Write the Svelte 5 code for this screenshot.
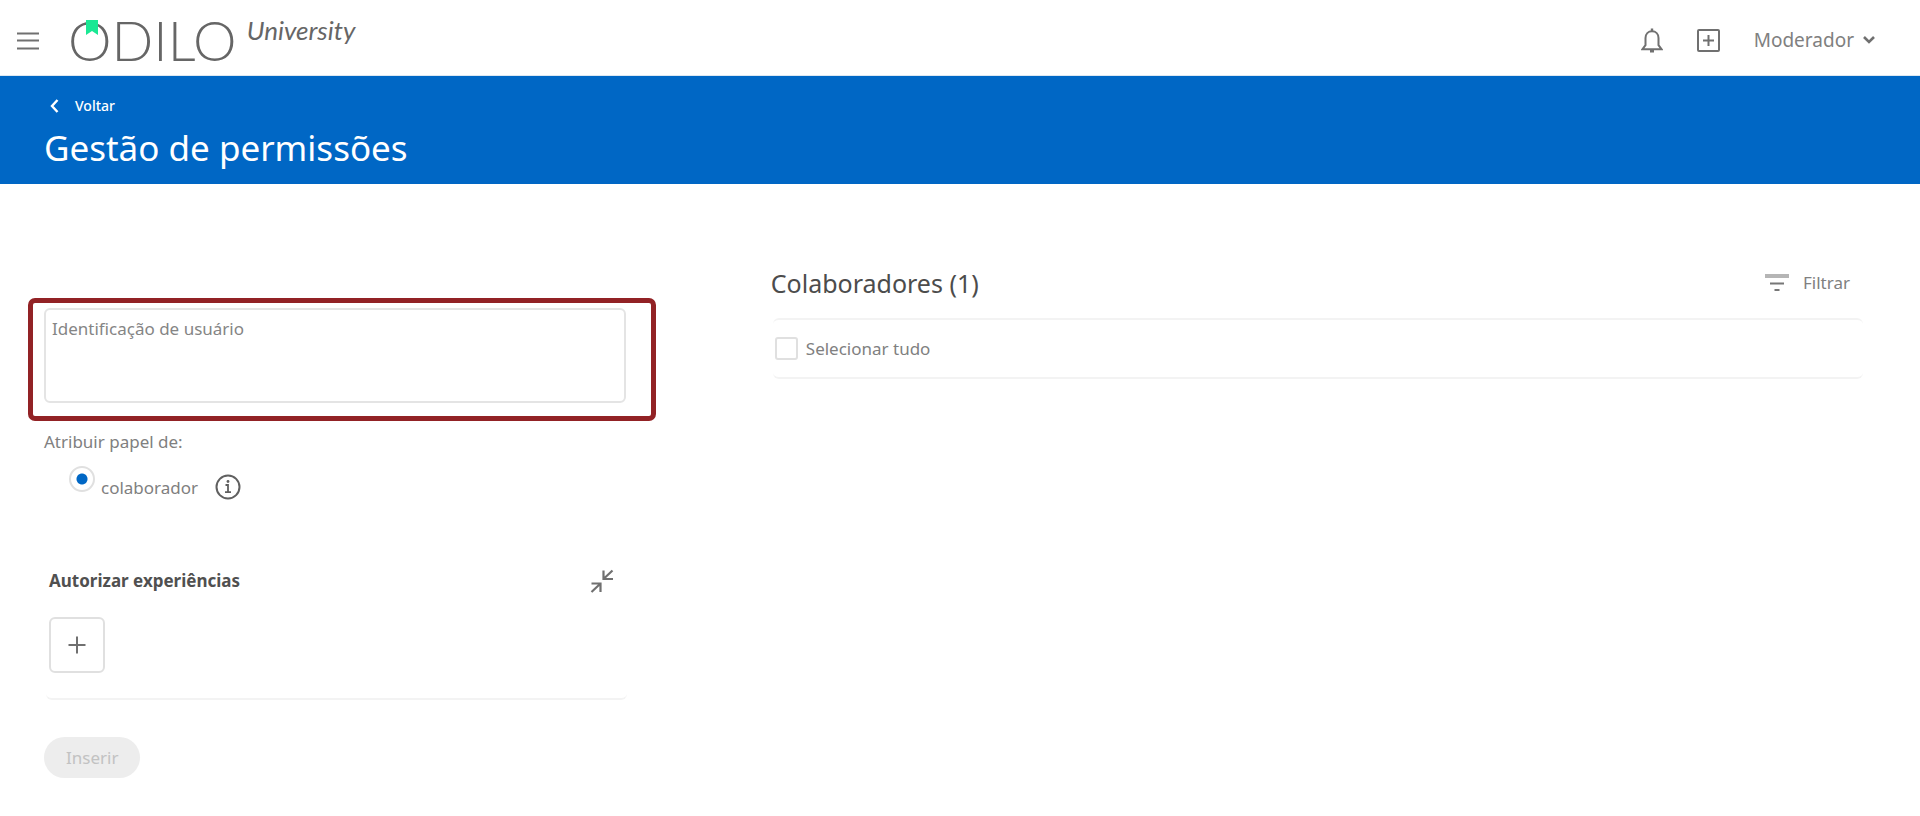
<script lang="ts">
  let userId = $state('');
  let role = $state('colaborador');
  let selectAll = $state(false);
  let expanded = $state(true);
  let collaborators = $state(1);
</script>

<header class="topbar">
  <button class="icon-btn menu" aria-label="Menu">
    <svg width="22" height="18" viewBox="0 0 22 18"><path d="M0 1.5h22M0 8.5h22M0 16.500h22" stroke="#707070" stroke-width="2" /></svg>
  </button>
  <a class="logo" href="#home">
    <span class="brand">ODILO</span>
    <svg class="bookmark" width="12" height="15" viewBox="0 0 12 15"><path d="M0 0h12v15l-6-4-6 4z" fill="#1ae894" /></svg>
    <span class="suffix">University</span>
  </a>
  <nav class="actions">
    <button class="icon-btn" aria-label="Notificações">
      <svg width="22" height="25" viewBox="0 0 22 25" fill="none" stroke="#707070" stroke-width="2"><path d="M1.5 21.200h19l-3-4V10c0-4-2.700-6.800-6.500-6.800S4.500 6 4.500 10v7.200z" /><path d="M11 0.500v2.500M9 23.200h4" stroke-width="2.400" /></svg>
    </button>
    <button class="icon-btn" aria-label="Criar">
      <svg width="23" height="23" viewBox="0 0 23 23" fill="none" stroke="#707070" stroke-width="2"><rect x="1" y="1" width="21" height="21" rx="1" /><path d="M6 11.500h11M11.500 6v11" /></svg>
    </button>
    <button class="account">
      Moderador
      <svg width="12" height="8" viewBox="0 0 12 8" fill="none" stroke="#707070" stroke-width="2.600"><path d="M1 1l5 5 5-5" /></svg>
    </button>
  </nav>
</header>

<section class="banner">
  <a class="back" href="#back">
    <svg width="9" height="14" viewBox="0 0 9 14" fill="none" stroke="#fff" stroke-width="2.400"><path d="M7.500 1L2 7l5.500 6" /></svg>
    Voltar
  </a>
  <h1>Gestão de permissões</h1>
</section>

<main>
  <form class="assign" onsubmit={(e) => e.preventDefault()}>
    <div class="highlight">
      <textarea bind:value={userId} placeholder="Identificação de usuário" aria-label="Identificação de usuário"></textarea>
    </div>

    <fieldset>
      <legend>Atribuir papel de:</legend>
      <div class="role">
        <input id="role-collab" type="radio" name="role" value="colaborador" bind:group={role} />
        <label for="role-collab">colaborador</label>
        <button type="button" class="icon-btn info" aria-label="Informação">
          <svg width="26" height="26" viewBox="0 0 26 26" fill="none" stroke="#606060" stroke-width="2"><circle cx="13" cy="13" r="11.500" /><path d="M10.500 11H13v7M10 18.200h6" stroke-width="1.800" /><circle cx="13" cy="7.500" r="1.400" fill="#606060" stroke="none" /></svg>
        </button>
      </div>
    </fieldset>

    <section class="experiences">
      <div class="experiences-head">
        <h2>Autorizar experiências</h2>
        <button type="button" class="icon-btn" aria-label="Recolher" onclick={() => (expanded = !expanded)}>
          <svg width="24" height="24" viewBox="0 0 24 24" fill="none" stroke="#707070" stroke-width="2.200"><path d="M13.500 1.500v8.500H23M22.500 1.500L14 9.500M1.500 14.500h9V23M10 15l-8.500 8" /></svg>
        </button>
      </div>
      {#if expanded}
        <button type="button" class="add" aria-label="Adicionar experiência">
          <svg width="18" height="18" viewBox="0 0 18 18" stroke="#707070" stroke-width="2"><path d="M0.500 9h17M9 0.500v17" /></svg>
        </button>
      {/if}
    </section>

    <button class="submit" disabled={!userId}>Inserir</button>
  </form>

  <section class="collaborators">
    <div class="collab-head">
      <h2>Colaboradores ({collaborators})</h2>
      <button class="filter">
        <svg width="24" height="18" viewBox="0 0 24 18"><path d="M0 2h24" stroke="#b5b5b5" stroke-width="4" /><path d="M5 9.500h14M9.500 16h5" stroke="#777" stroke-width="2" /></svg>
        Filtrar
      </button>
    </div>
    <div class="select-all">
      <input id="select-all" type="checkbox" bind:checked={selectAll} />
      <label for="select-all">Selecionar tudo</label>
    </div>
  </section>
</main>

<style>
  :global(body) { margin: 0; background: #fff; color: #808080; font: 17px/24px "Noto Sans", "Open Sans", sans-serif; }
  button, textarea, input { font: inherit; color: inherit; box-sizing: border-box; }
  button { padding: 0; border: 0; background: none; cursor: pointer; }
  h1, h2 { margin: 0; }
  svg { display: block; }
  a { text-decoration: none; }

  .topbar { display: flex; align-items: center; height: 76px; padding: 0 45px 0 17px; box-sizing: border-box; border-bottom: 1px solid #dce8f2; }
  .menu { margin-top: 6px; }
  .logo { position: relative; display: flex; align-items: flex-start; margin: 5px 0 0 29px; font-family: Lato, sans-serif; color: #666; }
  .brand { font-size: 55px; line-height: 72px; font-weight: 300; }
  .bookmark { position: absolute; left: 18px; top: 16px; }
  .suffix { margin-left: 10px; padding-top: 10px; font-size: 26px; line-height: 32px; font-style: italic; }
  .actions { display: flex; align-items: center; gap: 34px; margin-left: auto; margin-top: 5px; }
  .account { display: flex; align-items: center; gap: 9px; font-size: 19px; }

  .banner { height: 108px; padding: 20px 44px 0; box-sizing: border-box; background: #0067c5; color: #fff; }
  .back { display: flex; align-items: center; gap: 16px; margin-left: 6px; width: max-content; color: #fff; font-size: 14px; line-height: 20px; font-weight: 500; }
  h1 { margin-top: 10px; font-size: 35px; line-height: 44px; font-weight: 400; }

  main { display: grid; grid-template-columns: minmax(0, 73fr) minmax(0, 127fr); column-gap: 115px; padding: 82px 57px 36px 28px; }
  .assign { padding-top: 32px; }
  .highlight { padding: 5px 25px 13px 11px; border: 5px solid #922225; border-radius: 7px; }
  textarea { display: block; width: 100%; height: 95px; padding: 7px 6px; border: 2px solid #e4e4e4; border-radius: 6px; resize: none; outline: none; }
  textarea::placeholder { color: #858585; opacity: 1; }

  fieldset { margin: 9px 0 0; padding: 0 16px; border: 0; }
  legend { padding: 0; }
  .role { display: flex; align-items: flex-end; margin: 12px 0 0 25px; height: 34px; }
  input[type='radio'] { appearance: none; align-self: flex-start; width: 26px; height: 26px; margin: 0 6px 0 0; border: 2px solid #e0e0e0; border-radius: 50%; background: radial-gradient(circle, #0067c5 5px, #fff 6px); }
  .info { margin-left: 17px; }

  .experiences { margin: 69px 29px 0 18px; padding: 0 3px 25px; border-bottom: 2px solid #f3f3f3; border-radius: 6px; }
  .experiences-head { display: flex; align-items: center; justify-content: space-between; padding-right: 10px; }
  .experiences h2 { font-size: 17px; line-height: 24px; font-weight: 700; color: #505050; }
  .add { display: grid; place-items: center; width: 56px; height: 56px; margin-top: 24px; border: 2px solid #e0e0e0; border-radius: 6px; }

  .submit { height: 41px; margin: 37px 0 0 16px; padding: 0 22px; border-radius: 21px; background: #0067c5; color: #fff; }
  .submit:disabled { background: #ededed; color: #c2c2c2; cursor: default; }

  .collab-head { display: flex; align-items: center; justify-content: space-between; padding-right: 13px; }
  .collab-head h2 { font-size: 25px; line-height: 34px; font-weight: 400; color: #4c4c4c; }
  .filter { display: flex; align-items: center; gap: 14px; }
  .select-all { display: flex; align-items: center; gap: 8px; height: 61px; margin: 18px 0 0 2px; padding-left: 2px; box-sizing: border-box; border: solid #f3f3f3; border-width: 2px 0; border-radius: 6px; }
  input[type='checkbox'] { appearance: none; width: 23px; height: 23px; margin: 0; border: 2px solid #e0e0e0; border-radius: 3px; background: #fff; }
  input[type='checkbox']:checked { background: #0067c5; }
</style>
